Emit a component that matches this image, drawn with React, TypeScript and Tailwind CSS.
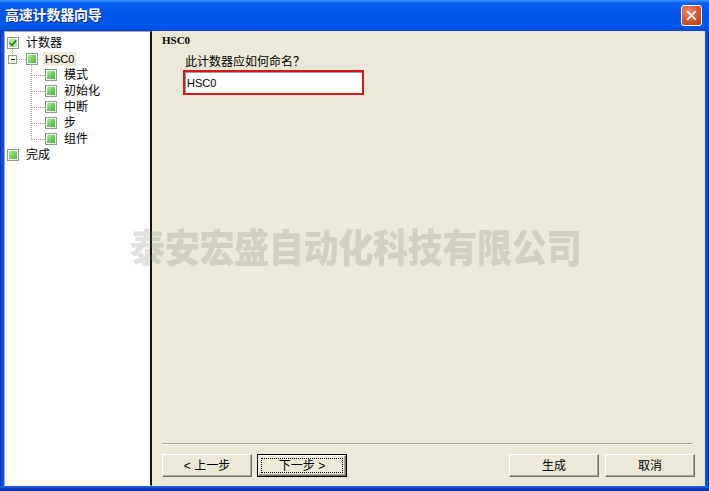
import { ReactNode } from "react";

const rowIndent: Record<number, string> = {
  0: "pl-[2px]",
  1: "pl-[21px]",
  2: "pl-[40px]",
};

type TreeItem = {
  label: string;
  level: number;
  checked?: boolean;
  selected?: boolean;
  latin?: boolean;
};

const treeItems: TreeItem[] = [
  { label: "计数器", level: 0, checked: true },
  { label: "HSC0", level: 1, selected: true, latin: true },
  { label: "模式", level: 2 },
  { label: "初始化", level: 2 },
  { label: "中断", level: 2 },
  { label: "步", level: 2 },
  { label: "组件", level: 2 },
  { label: "完成", level: 0 },
];

const CheckBox = ({ checked }: { checked?: boolean }) => (
  <span className="flex w-[12px] h-[12px] shrink-0 border border-[#8d9d86] bg-white p-px">
    {checked ? (
      <span className="flex flex-1 items-center justify-center bg-[#a9e39c]">
        <svg viewBox="0 0 8 8" className="w-[8px] h-[8px]">
          <path
            d="M0.8 4 L3 6.3 L7.2 1.4"
            stroke="#1d7a15"
            strokeWidth="1.7"
            fill="none"
          />
        </svg>
      </span>
    ) : (
      <span className="flex-1 bg-gradient-to-br from-[#a4ec93] to-[#43b92f]" />
    )}
  </span>
);

const TreeLines = () => (
  <svg
    className="absolute left-0 top-0 pointer-events-none"
    width="146"
    height="140"
    shapeRendering="crispEdges"
  >
    <g stroke="#a0a0a0" strokeDasharray="1 1" strokeWidth="1">
      <line x1="7.5" y1="17" x2="7.5" y2="23" />
      <line x1="12" y1="27.5" x2="21" y2="27.5" />
      <line x1="26.5" y1="33" x2="26.5" y2="108" />
      {[43, 59, 75, 91, 107].map((y) => (
        <line key={y} x1="27" y1={y + 0.5} x2="40" y2={y + 0.5} />
      ))}
    </g>
    <rect x="3.5" y="23.5" width="8" height="8" fill="#fff" stroke="#919b9c" />
    <line x1="5.5" y1="27.5" x2="10" y2="27.5" stroke="#000" />
  </svg>
);

const Tree = () => (
  <div className="relative w-[148px] shrink-0 bg-white border-l border-t border-l-[#aca899] border-t-[#aca899] border-r-2 border-r-[#141414] border-b border-b-[#f1efe2] pt-[3px] text-[12px] text-black">
    <TreeLines />
    {treeItems.map((item) => (
      <div
        key={item.label}
        className={`flex h-4 items-center ${rowIndent[item.level]}`}
      >
        <CheckBox checked={item.checked} />
        <span
          className={`ml-[5px] px-[2px] leading-[14px] ${
            item.selected ? "bg-[#ece9d8]" : ""
          } ${item.latin ? "text-[11px]" : ""}`}
        >
          {item.label}
        </span>
      </div>
    ))}
  </div>
);

const WizardButton = ({
  children,
  isDefault,
}: {
  children: ReactNode;
  isDefault?: boolean;
}) => (
  <div
    className={`w-[90px] h-[23px] flex ${
      isDefault ? "border border-black" : ""
    }`}
  >
    <div className="flex-1 flex items-center justify-center bg-[#ece9d8] border border-t-white border-l-white border-r-[#716f64] border-b-[#716f64] shadow-[inset_-1px_-1px_#aca899] text-[12px] text-black">
      {isDefault ? (
        <span className="flex-1 self-stretch m-[2px] flex items-center justify-center border border-dotted border-black">
          {children}
        </span>
      ) : (
        children
      )}
    </div>
  </div>
);

const TitleBar = () => (
  <div className="h-[31px] shrink-0 flex items-center pl-[5px] pr-[7px] bg-[linear-gradient(to_bottom,#3c94ff_0%,#0a5ff0_10%,#0055e8_45%,#0058ee_85%,#0047d0_100%)]">
    <span className="text-white text-[14px] font-bold tracking-[-0.2px] [text-shadow:1px_1px_#0b2a8c]">
      高速计数器向导
    </span>
    <div className="ml-auto w-[21px] h-[21px] rounded-[3px] border border-white bg-[radial-gradient(circle_at_35%_30%,#f08a66,#d4522c_55%,#b8381a)] flex items-center justify-center">
      <svg viewBox="0 0 12 12" className="w-[11px] h-[11px]">
        <path
          d="M2 2 L10 10 M10 2 L2 10"
          stroke="#fff"
          strokeWidth="2"
          strokeLinecap="square"
        />
      </svg>
    </div>
  </div>
);

const ContentPane = () => (
  <div className="flex-1 flex flex-col bg-[#ece9d8] text-black">
    <div className="pt-[3px] pl-[10px] font-['Liberation_Serif',serif] font-bold text-[11px] leading-[12px]">
      HSC0
    </div>
    <div className="mt-[9px] pl-[33px] text-[12px] leading-[15px]">
      此计数器应如何命名？
    </div>
    <div className="ml-[31px] mt-0 w-[181px] h-[25px] border-2 border-[#d8151b] flex">
      <div className="flex-1 flex items-center bg-white border-t border-l border-t-[#9c9a90] border-l-[#9c9a90] pl-px text-[11px]">
        HSC0
      </div>
    </div>
    <div className="flex-1" />
    <div className="ml-[10px] mr-[13px] h-[2px] border-t border-t-[#aca899] border-b border-b-white" />
    <div className="flex items-center mt-[9px] mb-[9px] pl-[10px] pr-[10px]">
      <div className="flex gap-[5px]">
        <WizardButton>&lt; 上一步</WizardButton>
        <WizardButton isDefault>下一步 &gt;</WizardButton>
      </div>
      <div className="ml-auto flex gap-[6px]">
        <WizardButton>生成</WizardButton>
        <WizardButton>取消</WizardButton>
      </div>
    </div>
  </div>
);

export default function App() {
  return (
    <div className="relative w-[709px] h-[491px] flex flex-col overflow-hidden bg-[#0b50e2] font-['Liberation_Sans','Noto_Sans_CJK_SC',sans-serif]">
      <TitleBar />
      <div className="flex flex-1 min-h-0 pl-[4px] pr-[4px] shadow-[inset_1px_0_#0030b0,inset_-1px_0_#0030b0]">
        <Tree />
        <ContentPane />
      </div>
      <div className="h-[5px] shrink-0 bg-[linear-gradient(to_bottom,#2a6cf0,#0d3fc4_50%,#0a2c96)]" />
      <div className="absolute left-[130px] top-[225px] pointer-events-none whitespace-nowrap font-['Noto_Sans_CJK_SC',sans-serif] font-black text-[35px] leading-none tracking-[-0.3px] text-[rgba(120,120,112,0.24)] scale-y-[1.12] origin-top">
        泰安宏盛自动化科技有限公司
      </div>
    </div>
  );
}
